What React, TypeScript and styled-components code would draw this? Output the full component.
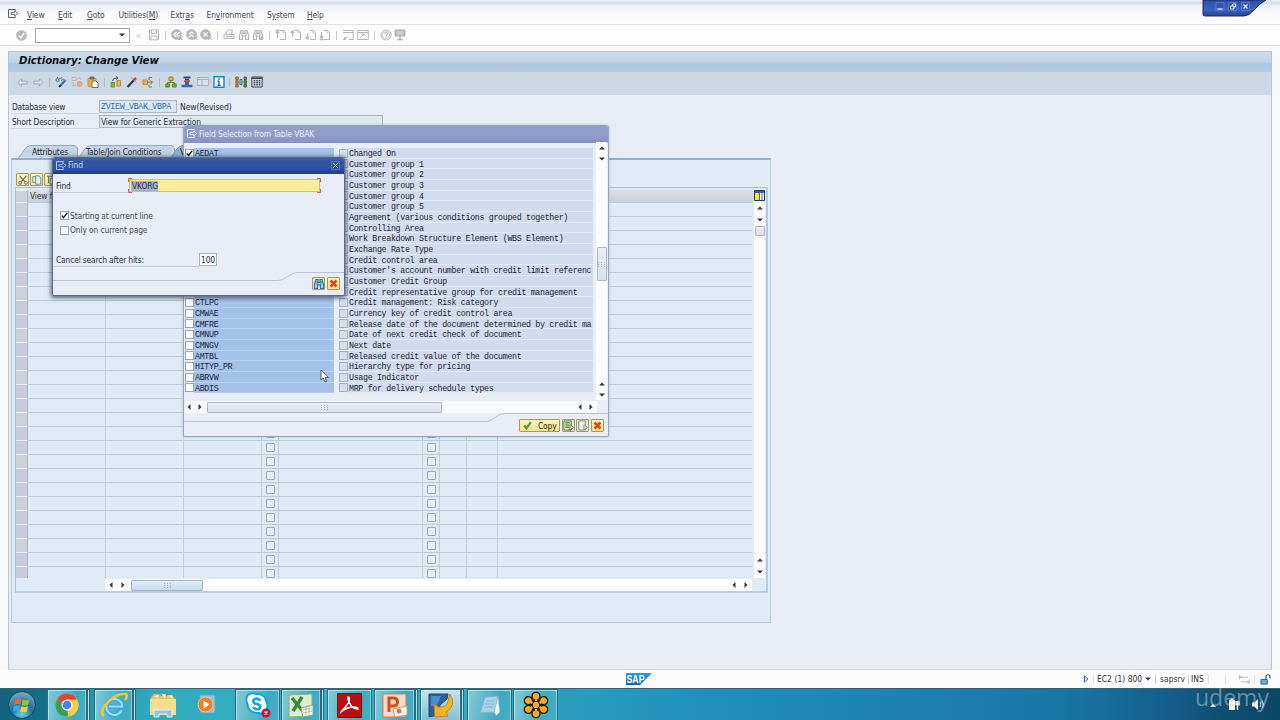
import React from "react";
import styled, { createGlobalStyle, css } from "styled-components";

const Global = createGlobalStyle`
  * { box-sizing: border-box; }
  body { margin: 0; overflow: hidden; font-family: "DejaVu Sans Condensed", "DejaVu Sans", sans-serif; font-stretch: condensed; font-size: 8.4px; letter-spacing: -0.12px; color: #2a2e38; }
  svg { display: block; flex: none; }
`;

const Screen = styled.div`
  position: relative;
  width: 1280px;
  height: 720px;
  overflow: hidden;
  display: flex;
  flex-direction: column;
  background: #f8f9fb;
`;

/* ---------- top bars ---------- */
const MenuBar = styled.nav`
  height: 25px;
  flex: none;
  display: flex;
  align-items: center;
  padding: 5px 0 0 8px;
  border-top: 1px solid #e9edf5;
  border-bottom: 1px solid #dfe1e4;
  background: linear-gradient(#e8ecf4 0, #d2d8e6 2px, #eff0f6 4px, #fbfbfd 14px, #fdfdfe);
`;
const MenuIcon = styled.span`
  width: 19px;
  margin-top: -4px;
`;
const MenuItem = styled.span<{ $w: number }>`
  width: ${(p) => p.$w}px;
  white-space: nowrap;
  color: #45455c;
  letter-spacing: -0.1px;
  u { text-underline-offset: 1px; }
`;
const CommandBar = styled.div`
  height: 21px;
  flex: none;
  display: flex;
  align-items: center;
  padding-left: 14px;
  background: #fdfdfd;
  border-bottom: 1px solid #dcdee2;
`;
const Slot = styled.span<{ $w: number }>`
  width: ${(p) => p.$w}px;
  flex: none;
  display: flex;
  justify-content: center;
  align-items: center;
`;
const Sep = styled.span<{ $w: number; $c?: string }>`
  width: ${(p) => p.$w}px;
  height: 9px;
  flex: none;
  display: flex;
  justify-content: center;
  &::before { content: ""; width: 1px; background: ${(p) => p.$c || "#c9c9cd"}; }
`;
const Combo = styled.span`
  width: 95px;
  height: 15px;
  margin-left: 7px;
  display: flex;
  align-items: center;
  justify-content: flex-end;
  padding-right: 4px;
  background: #fff;
  border: 1px solid #a3a6ab;
`;
const Chevrons = styled.span`
  width: 17px;
  text-align: center;
  color: #c6c6ca;
  font-size: 10px;
`;

/* ---------- work area ---------- */
const Work = styled.main`
  margin: 5px 8px 0;
  height: 619px;
  flex: none;
  border: 1px solid #b9c3cf;
  border-bottom-color: #d4d9e1;
  background: #e8ecf4;
`;
const Title = styled.h1`
  margin: 0;
  height: 20px;
  padding-left: 10px;
  font-size: 11.3px;
  line-height: 18px;
  letter-spacing: -0.03px;
  font-weight: bold;
  font-style: italic;
  color: #0b0d12;
  background: linear-gradient(#cddbea 0, #c3d3e6 50%, #afc6de 60%, #b1c9e1);
`;
const AppBar = styled.div`
  height: 23px;
  display: flex;
  align-items: center;
  padding: 0 0 3px 5px;
  background: #ccd9e4;
`;
const Form = styled.div`
  padding: 4px 0 0 2px;
`;
const FormRow = styled.div`
  height: 15px;
  display: flex;
  align-items: center;
  white-space: nowrap;
`;
const FormLabel = styled.span`
  width: 88px;
  height: 15px;
  line-height: 16px;
  padding-left: 1px;
  border-bottom: 1px solid #d2d6dd;
  letter-spacing: -0.18px;
`;
const ReadField = styled.span<{ $w: number; $mono?: boolean }>`
  width: ${(p) => p.$w}px;
  height: 13px;
  line-height: 12px;
  padding-left: 1px;
  border: 1px solid #a9b4c1;
  background: ${(p) => (p.$mono ? "#dbe7f2" : "#e0e7f1")};
  ${(p) => p.$mono && css`font-family: "Liberation Mono", monospace; font-size: 8.3px; letter-spacing: -0.31px; color: #2b74a8;`}
`;
const FieldNote = styled.span`
  padding-left: 3px;
  font-size: 8.6px;
  letter-spacing: -0.12px;
`;

const Tabs = styled.div`
  height: 12px;
  margin-top: 17px;
  padding-left: 9px;
  display: flex;
  align-items: flex-end;
`;
const Tab = styled.span<{ $w: number; $pad: number }>`
  position: relative;
  width: ${(p) => p.$w}px;
  height: 13px;
  line-height: 15px;
  padding-left: ${(p) => p.$pad}px;
  color: #20242c;
  white-space: nowrap;
  svg { position: absolute; left: 0; top: 0; }
  b { position: relative; font-weight: normal; }
`;
const TabPanel = styled.section`
  width: 760px;
  height: 465px;
  margin-left: 2px;
  border: 1px solid #b3c9dd;
  border-top: 2px solid #8eacd6;
  border-bottom: 1px solid #b4c6d8;
  background: #dfeaf4;
  padding: 13px 2px 0 3px;
`;
const MiniButtons = styled.div`
  display: flex;
  gap: 1px;
  height: 14px;
  padding-left: 1px;
`;
const YellowButton = styled.span<{ $w?: number; $pale?: boolean }>`
  width: ${(p) => p.$w || 13}px;
  height: 13px;
  flex: none;
  display: flex;
  align-items: center;
  justify-content: center;
  gap: 6px;
  border: 1px solid #a49a67;
  border-radius: 1px;
  background: ${(p) => (p.$pale ? "#e3e6cf" : "linear-gradient(#fbf3b8, #f2e48f)")};
  color: #26260f;
`;
const GridFrame = styled.div`
  height: 406px;
  border: 1px solid #a9c2d9;
  border-right: 2px solid #b6cadd;
  border-bottom: 2px solid #bccede;
  display: flex;
`;
const GridMain = styled.div`
  width: 737px;
  padding-top: 2px;
`;
const GridHead = styled.div`
  height: 12px;
  display: flex;
  background: linear-gradient(#dadde1, #cdd1d7);
  line-height: 13px;
`;
const HeadLabel = styled.span`
  flex: 1;
  padding-left: 2px;
`;
const GridBody = styled.div`
  height: 376px;
  overflow: hidden;
`;
const GridRow = styled.div`
  height: 14px;
  display: flex;
`;
const RowHandle = styled.span<{ $violet?: boolean }>`
  width: 12px;
  flex: none;
  background: ${(p) => (p.$violet ? "#c9cbdc" : "#ccd1d7")};
  border-right: 1px solid #a9b3c2;
  border-top: 1px solid #edf1f5;
`;
const Cell = styled.span<{ $w: number; $line?: boolean }>`
  width: ${(p) => p.$w}px;
  flex: none;
  display: flex;
  align-items: center;
  justify-content: center;
  border-top: 1px solid #bccbd9;
  ${(p) => p.$line && css`border-right: 1px solid #becddb;`}
`;
const GhostCheck = styled.i`
  width: 9px;
  height: 9px;
  border: 1px solid #9aa9b9;
  border-radius: 1px;
  background: #e5edf5;
`;
const GridVScroll = styled.div`
  width: 13px;
  display: flex;
  flex-direction: column;
  align-items: center;
  padding-top: 2px;
`;
const VTrack = styled.div`
  width: 11px;
  height: 376px;
  display: flex;
  flex-direction: column;
  align-items: center;
  background: #fbfcfd;
`;
const ArrowBox = styled.span<{ $w?: number; $h?: number }>`
  width: ${(p) => p.$w || 11}px;
  height: ${(p) => p.$h || 12}px;
  flex: none;
  display: flex;
  align-items: center;
  justify-content: center;
`;
const Thumb = styled.span<{ $w: number; $h: number; $blue?: boolean }>`
  width: ${(p) => p.$w}px;
  height: ${(p) => p.$h}px;
  flex: none;
  display: flex;
  align-items: center;
  justify-content: center;
  border: 1px solid ${(p) => (p.$blue ? "#9fb3cb" : "#b1b7c4")};
  border-radius: 1px;
  background: ${(p) => (p.$blue ? "linear-gradient(#e1ebf6, #c8d9eb)" : "linear-gradient(#e9edf4, #dce2ec)")};
`;
const Spacer = styled.span`
  flex: 1;
`;
const GridHScroll = styled.div`
  width: 647px;
  height: 12px;
  margin: 1px 0 0 89px;
  display: flex;
  align-items: center;
  background: #fbfcfd;
`;

/* ---------- status bar and taskbar ---------- */
const StatusBar = styled.footer`
  height: 18px;
  flex: none;
  display: flex;
  align-items: center;
  background: #fcfcfd;
  color: #2c2f36;
  white-space: nowrap;
`;
const StatusGroup = styled.div`
  margin-left: 430px;
  display: flex;
  align-items: center;
  height: 18px;
`;
const StatusText = styled.span<{ $w: number }>`
  width: ${(p) => p.$w}px;
  letter-spacing: 0.05px;
`;
const Taskbar = styled.div`
  position: relative;
  height: 32px;
  flex: none;
  display: flex;
  align-items: stretch;
  border-top: 1px solid #35606f;
  background: linear-gradient(90deg, #12647f 0, #14708a 45px, #2493a9 90px, #2fa9bc 150px, #35b1c3 330px, #33a9c0 480px, #2a9cc0 580px, #2190bf 700px, #1c82b3 900px, #1976a7 1060px, #14618e 1160px, #0e4c6e 1230px, #0c4768);
`;
const TaskButton = styled.span<{ $w: number; $ml?: number; $frame?: boolean; $on?: boolean }>`
  width: ${(p) => p.$w}px;
  margin-left: ${(p) => p.$ml || 0}px;
  flex: none;
  display: flex;
  align-items: center;
  justify-content: center;
  ${(p) =>
    p.$frame &&
    css`
      border: 1px solid #2b6b80;
      border-bottom: 0;
      box-shadow: inset 1px 1px 0 rgba(220, 245, 250, 0.55), inset -1px 0 0 rgba(220, 245, 250, 0.45);
      background: ${p.$on ? "linear-gradient(#c3e3ec, #7fc3d6)" : "linear-gradient(100deg, #83c9d6 0, #5bb8ca 40%, #3fa9bf 70%, #45b0c5)"};
    `}
`;
const Tray = styled.div`
  margin-left: auto;
  padding-right: 15px;
  display: flex;
  align-items: center;
  gap: 10px;
`;
const Watermark = styled.span`
  position: absolute;
  left: 1195px;
  top: -7px;
  font-family: "Open Sans", "Noto Sans", sans-serif;
  font-stretch: normal;
  font-size: 23px;
  line-height: 30px;
  letter-spacing: 0;
  color: rgba(190, 210, 222, 0.5);
`;

/* ---------- windows ---------- */
const WindowControls = styled.div`
  position: absolute;
  left: 1202px;
  top: 0;
`;
const Window = styled.section<{ $x: number; $y: number; $w: number; $h: number; $front?: boolean }>`
  position: absolute;
  left: ${(p) => p.$x}px;
  top: ${(p) => p.$y}px;
  width: ${(p) => p.$w}px;
  height: ${(p) => p.$h}px;
  border: 1px solid ${(p) => (p.$front ? "#5a6a88" : "#97a5bd")};
  border-radius: 3px 3px 2px 2px;
  overflow: hidden;
  display: flex;
  flex-direction: column;
  background: #e9edf5;
  box-shadow: ${(p) => (p.$front ? "0 1px 4px 1px rgba(40,52,80,.75)" : "0 0 2px rgba(90,110,140,.5)")};
`;
const WindowTitle = styled.header<{ $front?: boolean }>`
  height: ${(p) => (p.$front ? 16 : 17)}px;
  flex: none;
  display: flex;
  align-items: center;
  gap: 1px;
  padding: 0 4px 2px 3px;
  color: ${(p) => (p.$front ? "#c9d6f2" : "#e9edf9")};
  background: ${(p) => (p.$front ? "linear-gradient(#3f5da6 0, #34539f 30%, #2f53a6 60%, #1f3d86)" : "linear-gradient(#8f9dcb, #919fce 50%, #8491c2)")};
  span { flex: 1; }
`;
const Close = styled.i`
  width: 9px;
  height: 9px;
  border: 1px solid #4f76c8;
  display: flex;
  align-items: center;
  justify-content: center;
`;
const ListArea = styled.div`
  height: 253px;
  padding: 5px 1px 0 1px;
  display: flex;
`;
const List = styled.div`
  width: 408px;
  flex: none;
`;
const ListRow = styled.div`
  height: 10.68px;
  display: flex;
  font-family: "Liberation Mono", monospace;
  font-size: 8.3px;
  line-height: 11px;
  letter-spacing: -0.32px;
  color: #1d2434;
  white-space: pre;
`;
const Check = styled.i<{ $ghost?: boolean }>`
  width: 9px;
  height: 9px;
  margin-top: 0.5px;
  flex: none;
  border: 1px solid ${(p) => (p.$ghost ? "#a5afc4" : "#98a3b8")};
  background: ${(p) => (p.$ghost ? "#d5ddea" : "#fdfdfe")};
`;
const KeyCell = styled.span`
  width: 140px;
  margin-right: 5px;
  padding-left: 1px;
  overflow: hidden;
  background: #a3c1e9;
  box-shadow: inset 0 -1px 0 #b9d1f0;
`;
const TextCell = styled.span`
  width: 245px;
  padding-left: 1px;
  overflow: hidden;
  background: #d2dbed;
  box-shadow: inset 0 -1px 0 #e3e8f4;
`;
const ListVScroll = styled.div`
  width: 11px;
  margin: -6px 0 -5px auto;
  display: flex;
  flex-direction: column;
  align-items: center;
  background: #fbfcfe;
`;
const ListHScroll = styled.div`
  height: 12px;
  margin: 6px 11px 0 1px;
  display: flex;
  align-items: center;
  background: #f8fafd;
`;
const DialogFoot = styled.div<{ $pad: number }>`
  position: relative;
  margin-top: auto;
  height: 23px;
  padding: ${(p) => p.$pad}px 4px 0 0;
  display: flex;
  justify-content: flex-end;
  gap: 1.6px;
  > svg { position: absolute; left: 0; top: 0; }
  > span { position: relative; }
`;
const FindBody = styled.div`
  padding-left: 1px;
  white-space: nowrap;
`;
const FindRow = styled.div<{ $top: number }>`
  margin-top: ${(p) => p.$top}px;
  height: 15px;
  display: flex;
  align-items: center;
`;
const FindLabel = styled.span<{ $w: number }>`
  width: ${(p) => p.$w}px;
  height: 15px;
  line-height: 16px;
  padding-left: 2px;
  border-bottom: 1px solid #c3cad6;
  letter-spacing: -0.16px;
`;
const FindInput = styled.span`
  position: relative;
  width: 191px;
  height: 13px;
  display: flex;
  align-items: center;
  padding-left: 1px;
  border: 1px solid #c8bf8c;
  background: #fbec98;
  svg { position: absolute; left: -2px; top: -2px; }
`;
const Selected = styled.span`
  height: 10px;
  line-height: 10px;
  padding: 0 0 0 1px;
  background: #a3b4cb;
  color: #26304a;
`;
const HitsInput = styled.span`
  width: 18px;
  height: 13px;
  line-height: 12px;
  text-align: center;
  background: #fbfcfd;
  border: 1px solid #a9b1bd;
`;
const OptionCheck = styled.i`
  width: 9px;
  height: 9px;
  margin: 0 1px 0 6px;
  border: 1px solid #98a3b8;
  background: #fdfdfe;
`;
const OptionText = styled.span`
  letter-spacing: -0.12px;
  color: #444b58;
`;
const Pointer = styled.div`
  position: absolute;
  left: 320px;
  top: 369px;
`;

/* ---------- icons ---------- */
type IcoProps = { s?: number; c?: string; children: React.ReactNode; f?: string };
const Ico = ({ s = 12, c = "#b5b5ba", f = "none", children }: IcoProps) => (
  <svg width={s} height={s} viewBox="0 0 12 12" fill={f} stroke={c} strokeWidth="1">{children}</svg>
);
const Tri = ({ d }: { d: "u" | "d" | "l" | "r" }) => {
  const pts = { u: "0,4.5 6,4.5 3,1.5", d: "0,1.5 6,1.5 3,4.5", l: "4.5,0 4.5,6 1.5,3", r: "1.5,0 1.5,6 4.5,3" }[d];
  return <svg width="6" height="6"><polygon points={pts} fill="#33363f" /></svg>;
};
const Exit = ({ c }: { c: string }) => (
  <svg width="11" height="9" viewBox="0 0 11 9" fill="none" stroke={c}>
    <path d="M7.5 1.5V.5h-7v8h7v-1" /><path d="M3 3.5h3.5v-1.6L10 4.4 6.5 7V5.5H3z" strokeWidth=".8" />
  </svg>
);
const Grip = () => (
  <svg width="7" height="5" fill="#a3adbf"><path d="M0 0h1v1H0zM3 0h1v1H3zM6 0h1v1H6zM0 2h1v1H0zM3 2h1v1H3zM6 2h1v1H6zM0 4h1v1H0zM3 4h1v1H3zM6 4h1v1H6z" /></svg>
);
const Binoculars = ({ c, f, plus }: { c: string; f?: string; plus?: boolean }) => (
  <Ico c={c} f={f || "none"} s={12}>
    <path d="M3 1.5h2v3h2v-3h2l1.5 5v4H7.5V7h-3v3.5h-3v-4z" strokeWidth="1.2" /><path d="M4 3v4M8 3v4" />
    {plus && <path d="M9.5 7v4M7.5 9h4" strokeWidth="1.4" />}
  </Ico>
);
const CheckMark = ({ c = "#1c2230", s = 8, w = 1.6 }: { c?: string; s?: number; w?: number }) => (
  <svg width={s} height={s} viewBox="0 0 8 8" fill="none" stroke={c} strokeWidth={w}><path d="M1 4l2 2.5L7 1" /></svg>
);
const RedCross = () => (
  <svg width="9" height="9" viewBox="0 0 9 9"><path d="M1.5 1.5l6 6m0-6l-6 6" stroke="#d14a1c" strokeWidth="2.6" /></svg>
);
const Disc = ({ children }: { children: React.ReactNode }) => (
  <Ico><circle cx="5.5" cy="5.5" r="5" fill="#b4b4b8" stroke="#c6c6ca" /><g stroke="#fff" strokeWidth="1.2">{children}</g><path d="M8 7.5l3.5 3.5M11.5 7.5L8 11" stroke="#aaa" /></Ico>
);
const Page = ({ a }: { a: string }) => (
  <Ico><path d="M4.5 1.5h4l2 2v7h-5.5" /><path d="M8 1.5v2.5h2.500" strokeWidth=".7" /><path d={a} strokeWidth="1.3" /></Ico>
);

const CommandIcons = () => (
  <>
    <Slot $w={14.7}><Ico><path d="M1.5.8h9v10h-9z" /><path d="M3.5 1v3.5h5V1M3 10.500V7h6v3.500" /></Ico></Slot>
    <Sep $w={8} />
    <Slot $w={14.7}><Disc><path d="M5.500 3L3 5.500 5.500 8M8.500 3L6 5.500 8.500 8" /></Disc></Slot>
    <Slot $w={14.7}><Disc><path d="M3 5l2.500-2L8 5M3 8l2.500-2L8 8" /></Disc></Slot>
    <Slot $w={14.7}><Disc><path d="M3.500 3.500l4 4m0-4l-4 4" /></Disc></Slot>
    <Sep $w={8} />
    <Slot $w={14.7}><Ico><path d="M1 5.500h10v4H1zM3 5L4.500 1h5L8.500 5M2.500 7.500h7" /></Ico></Slot>
    <Slot $w={14.7}><Binoculars c="#b5b5ba" /></Slot>
    <Slot $w={14.7}><Binoculars c="#b5b5ba" plus /></Slot>
    <Sep $w={8} />
    <Slot $w={14.7}><Page a="M.5 1.500h4M2.500 6V2.500M1 4l1.500-1.500L4 4M2.500 6v3" /></Slot>
    <Slot $w={14.7}><Page a="M2.500 7V2M.8 4l1.700-2 1.700 2" /></Slot>
    <Slot $w={14.7}><Page a="M2.500 5v5M.8 8l1.700 2 1.700-2" /></Slot>
    <Slot $w={14.7}><Page a="M.5 10.500h4M2.500 3v6M1 7l1.500 2L4 7" /></Slot>
    <Sep $w={8.500} />
    <Slot $w={14.7}><Ico><path d="M.8 1.500h10.500v9H7M1 3.500h10M1 10.500h3M4 7.500L2 9l2 2M2 9h4" /></Ico></Slot>
    <Slot $w={14.7}><Ico><path d="M.8 1.500h10.500v9H.8zM1 3.500h10M3 9l4-4M4.500 5H7v2.500" /></Ico></Slot>
    <Sep $w={8} />
    <Slot $w={14.7}><Ico><circle cx="6" cy="6" r="5" /><circle cx="6" cy="6" r="3.600" strokeWidth=".6" /><path d="M4.500 5q0-1.500 1.500-1.500T7.500 5Q7.500 6 6 6.500M6 7.500v1.300" /></Ico></Slot>
    <Slot $w={14.7}><Ico><path d="M1 1h10v6H1z" fill="#b0b0b4" /><path d="M2.500 3h7M2.500 5h7" stroke="#e5e5e8" /><path d="M6 7v3M3 10.500h6" strokeWidth="1.500" /></Ico></Slot>
  </>
);

const AppIcons = () => {
  const sep = "#a9b9c8";
  return (
    <>
      <Slot $w={16}><Ico c="#93a5b8" s={11}><path d="M1 6l4-4v2.500h6v3H5V10z" fill="#dbe5ee" /></Ico></Slot>
      <Slot $w={16}><Ico c="#93a9c0" s={11}><path d="M11 6L7 2v2.500H1v3h6V10z" fill="#cfdfee" /></Ico></Slot>
      <Sep $w={7} $c={sep} />
      <Slot $w={16}><Ico c="#3e6fa5"><path d="M1 4a1.500 1.500 0 113 0 1.500 1.500 0 11-3 0M4 3l3-1.500M2 2l1-1" /><path d="M5.500 9.500L10.500 4" strokeWidth="2.200" /><path d="M4 11l1-2 1 1z" fill="#222" stroke="#222" /><path d="M6.500 5a1.500 1.500 0 012.500-1.500" /></Ico></Slot>
      <Slot $w={16}><Ico c="#c3bcae"><path d="M1 1.500h4v3H1z" fill="#d7dccf" /><path d="M6.500 3.500l2-2 1.500 2" stroke="#d5a58e" /><circle cx="8.500" cy="8" r="2.500" fill="#dfa99b" stroke="#d09a8c" /><path d="M2 6v4l3-1" stroke="#a7bf97" /></Ico></Slot>
      <Slot $w={16}><Ico c="#8e6f35"><path d="M1 2.500h8v8H1z" fill="#eeb03c" stroke="#d0902a" /><path d="M3 1h4v2H3z" fill="#6d7380" stroke="#555" strokeWidth=".6" /><path d="M5 5h4l2 2v4.500H5z" fill="#fdfdfd" stroke="#686c78" /></Ico></Slot>
      <Sep $w={6.500} $c={sep} />
      <Slot $w={16}><Ico c="#5f9a3d"><path d="M1 6.500h3.500V11H1z" fill="#7fb54e" /><path d="M2.500 5Q3 1.500 7 2M6 .5l2 1.500-2 1.500" stroke="#4a5a50" /><path d="M7 4.500h3.500v5.500H7z" fill="#f3b84d" stroke="#bd8430" /></Ico></Slot>
      <Slot $w={16}><Ico c="#2d3340"><path d="M1.500 11L8 4" strokeWidth="2" /><path d="M7.500 4.500L10 2" stroke="#d5472c" strokeWidth="2.500" /><path d="M5 1.500l1.500 1M10.500 6.500L9.500 5.500" stroke="#e3705a" /></Ico></Slot>
      <Slot $w={16}><Ico c="#c2832a"><path d="M1 4h4.500v4.500H1z" fill="#f0b24b" /><path d="M5.500 6.200h4.500M8.500 4.500l2 1.700-2 1.800M7 4V1.500h3M7 8.500V11h3" stroke="#8b6a46" /></Ico></Slot>
      <Sep $w={7} $c={sep} />
      <Slot $w={16}><Ico c="#577a35"><path d="M4 1h4v3.500H4z" fill="#edb248" stroke="#a87a28" /><path d="M6 4.500v2M2.500 8V6.500h7V8" /><path d="M.8 8h3.700v3H.8zM7.500 8h3.700v3H7.500z" fill="#7cae48" /></Ico></Slot>
      <Slot $w={16}><Ico c="#2e4b80"><path d="M2.500 1.500h7" strokeWidth="2" /><path d="M3 5.200h6" stroke="#c8412f" strokeWidth="1.800" /><path d="M4 3.500h4" strokeWidth="1.500" /><path d="M6 6v3" stroke="#3f63a0" strokeWidth="4" /><path d="M.5 10h11" stroke="#3b65a8" strokeWidth="2.500" /></Ico></Slot>
      <Slot $w={16}><Ico c="#a9b3bb"><path d="M.5 1.500h11v8H.5zM.5 3.500h11M5 3.500v6" fill="#dce2e8" /></Ico></Slot>
      <Slot $w={16}><Ico c="#2382b8" s={12}><path d="M1 .8h10v10.500H1z" fill="#f3fafd" strokeWidth="1.400" /><path d="M6 5v4.500M4.500 5.200H6M4.500 9.300h3" stroke="#1b5f95" strokeWidth="1.300" /><path d="M5.300 3h1.400" stroke="#1b5f95" strokeWidth="1.500" /></Ico></Slot>
      <Sep $w={6} $c={sep} />
      <Slot $w={16}><Ico c="#86652a" s={12}><path d="M.8 1h2.400v2.500H.8zM.8 4.700h2.400v2.500H.8zM.8 8.400h2.400V11H.8z" fill="#c99134" /><path d="M5 3.500h2v5H5z" stroke="#3c5d80" /><path d="M9 1h2.400v2.500H9zM9 4.700h2.400v2.500H9zM9 8.400h2.400V11H9z" fill="#5e9b46" stroke="#386433" /></Ico></Slot>
      <Slot $w={16}><Ico c="#3a4252" s={12}><path d="M.8 1h10.400v10H.8z" fill="#d4dbe4" /><path d="M1 2.200h10" strokeWidth="1.500" /><path d="M3.500 4v6M6 4v6M8.500 4v6" strokeWidth="1.500" strokeDasharray="1.500 .5" /></Ico></Slot>
    </>
  );
};

const columns: { w: number; line?: boolean; check?: boolean }[] = [
  { w: 78, line: true },
  { w: 78, line: true },
  { w: 78, line: true },
  { w: 17, line: true, check: true },
  { w: 144, line: true },
  { w: 17, line: true, check: true },
  { w: 27, line: true },
  { w: 31, line: true },
  { w: 254 },
];

const fields: [string, string][] = [
  ["AEDAT", "Changed On"],
  ["", "Customer group 1"],
  ["", "Customer group 2"],
  ["", "Customer group 3"],
  ["", "Customer group 4"],
  ["", "Customer group 5"],
  ["", "Agreement (various conditions grouped together)"],
  ["", "Controlling Area"],
  ["", "Work Breakdown Structure Element (WBS Element)"],
  ["", "Exchange Rate Type"],
  ["", "Credit control area"],
  ["", "Customer's account number with credit limit referenc"],
  ["", "Customer Credit Group"],
  ["", "Credit representative group for credit management"],
  ["CTLPC", "Credit management: Risk category"],
  ["CMWAE", "Currency key of credit control area"],
  ["CMFRE", "Release date of the document determined by credit ma"],
  ["CMNUP", "Date of next credit check of document"],
  ["CMNGV", "Next date"],
  ["AMTBL", "Released credit value of the document"],
  ["HITYP_PR", "Hierarchy type for pricing"],
  ["ABRVW", "Usage Indicator"],
  ["ABDIS", "MRP for delivery schedule types"],
];

const TabShape = ({ w, active }: { w: number; active?: boolean }) => (
  <svg width={w} height="13">
    <path d={`M0 12.500Q3 11 6 5Q9 .5 13 .5H${w - 3}L${w - 0.5} 3V12.500`} fill={active ? "#8fb2dd" : "#c3d4e4"} stroke={active ? "#6d94c6" : "#93abc4"} />
  </svg>
);

const WorkArea = () => (
  <Work>
    <Title>Dictionary: Change View</Title>
    <AppBar><AppIcons /></AppBar>
    <Form>
      <FormRow>
        <FormLabel>Database view</FormLabel>
        <ReadField $w={78} $mono>ZVIEW_VBAK_VBPA</ReadField>
        <FieldNote>New(Revised)</FieldNote>
      </FormRow>
      <FormRow>
        <FormLabel>Short Description</FormLabel>
        <ReadField $w={284}>View for Generic Extraction</ReadField>
      </FormRow>
    </Form>
    <Tabs>
      <Tab $w={60} $pad={14}><TabShape w={60} /><b>Attributes</b></Tab>
      <Tab $w={92} $pad={8}><TabShape w={97} /><b>Table/Join Conditions</b></Tab>
      <Tab $w={78} $pad={10}><TabShape w={78} active /><b>V</b></Tab>
    </Tabs>
    <TabPanel>
      <MiniButtons>
        <YellowButton><Ico s={10} c="#5b6670"><path d="M2 1l6 7M10 1L4 8" strokeWidth="1.300" /><circle cx="2.500" cy="9.500" r="1.700" /><circle cx="9.500" cy="9.500" r="1.700" /></Ico></YellowButton>
        <YellowButton><Ico s={10} c="#4a82a8"><path d="M1 2h4v7H1z" /><path d="M4.500 1h4l2 2.500V11h-6z" fill="#e6f2f8" /></Ico></YellowButton>
        <YellowButton><Ico s={10} c="#55606b"><path d="M1 1.500h9M3 2v8" /><path d="M5 4h5v7H5z" fill="#fff" /></Ico></YellowButton>
      </MiniButtons>
      <GridFrame>
        <GridMain>
          <GridHead>
            <RowHandle />
            <HeadLabel>View field</HeadLabel>
          </GridHead>
          <GridBody>
            {Array.from({ length: 27 }, (_, r) => (
              <GridRow key={r}>
                <RowHandle $violet={r % 3 !== 0} />
                {columns.map((c, i) => (
                  <Cell key={i} $w={c.w} $line={c.line}>{c.check && <GhostCheck />}</Cell>
                ))}
              </GridRow>
            ))}
          </GridBody>
          <GridHScroll>
            <ArrowBox $w={12}><Tri d="l" /></ArrowBox>
            <ArrowBox $w={12}><Tri d="r" /></ArrowBox>
            <ArrowBox $w={2} />
            <Thumb $w={72} $h={11} $blue><Grip /></Thumb>
            <Spacer />
            <ArrowBox $w={12}><Tri d="l" /></ArrowBox>
            <ArrowBox $w={12}><Tri d="r" /></ArrowBox>
          </GridHScroll>
        </GridMain>
        <GridVScroll>
          <svg width="11" height="11"><path d="M.5.5h10v10H.5z" fill="#fff" stroke="#23304e" /><path d="M1 1h9v2H1z" fill="#3d5f93" /><path d="M1 3h4v7H1z" fill="#f0e72e" /><path d="M5.500 3v7.500M8 3v7.500" stroke="#50617c" /></svg>
          <ArrowBox $h={1} />
          <VTrack>
            <ArrowBox><Tri d="u" /></ArrowBox>
            <ArrowBox><Tri d="d" /></ArrowBox>
            <Thumb $w={10} $h={10} />
            <Spacer />
            <ArrowBox><Tri d="u" /></ArrowBox>
            <ArrowBox><Tri d="d" /></ArrowBox>
          </VTrack>
        </GridVScroll>
      </GridFrame>
    </TabPanel>
  </Work>
);

const FieldSelection = () => (
  <Window $x={183} $y={125} $w={426} $h={312}>
    <WindowTitle><Exit c="#e9edf9" /><span>Field Selection from Table VBAK</span></WindowTitle>
    <ListArea>
      <List>
        {fields.map(([key, text], i) => (
          <ListRow key={i}>
            <Check>{i === 0 && <CheckMark s={7} />}</Check>
            <KeyCell>{key}</KeyCell>
            <Check $ghost />
            <TextCell>{text}</TextCell>
          </ListRow>
        ))}
      </List>
      <ListVScroll>
        <ArrowBox $h={11}><Tri d="u" /></ArrowBox>
        <ArrowBox $h={11}><Tri d="d" /></ArrowBox>
        <ArrowBox $h={83} />
        <Thumb $w={10} $h={34}><Grip /></Thumb>
        <Spacer />
        <ArrowBox $h={11}><Tri d="u" /></ArrowBox>
        <ArrowBox $h={11}><Tri d="d" /></ArrowBox>
      </ListVScroll>
    </ListArea>
    <ListHScroll>
      <ArrowBox $w={8}><Tri d="l" /></ArrowBox>
      <ArrowBox $w={14}><Tri d="r" /></ArrowBox>
      <Thumb $w={235} $h={11}><Grip /></Thumb>
      <Spacer />
      <ArrowBox $w={11}><Tri d="l" /></ArrowBox>
      <ArrowBox $w={12}><Tri d="r" /></ArrowBox>
    </ListHScroll>
    <DialogFoot $pad={6}>
      <svg width="424" height="12" fill="none" stroke="#b9c3d1"><path d="M0 8.500H302Q305 8.500 308 6.500L316 1.500Q318 .5 321 .5H424" /></svg>
      <YellowButton $w={41}><CheckMark c="#5d9a2f" s={9} w={2} />Copy</YellowButton>
      <YellowButton $pale><Ico s={11} c="#55713d"><path d="M1 1h8v10H1z" fill="#e9efdc" /><path d="M2.500 3h5M2.500 5.500h4M2.500 8h4" stroke="#53a331" strokeWidth="1.600" /><path d="M7.500 5l4 3-4 3z" fill="#f7f7f0" /></Ico></YellowButton>
      <YellowButton $pale><Ico s={11} c="#7d8578"><path d="M2 1h7v10H2z" fill="#eef0ea" /><path d="M7.500 5l4 3-4 3z" fill="#f7f7f0" /></Ico></YellowButton>
      <YellowButton><RedCross /></YellowButton>
    </DialogFoot>
  </Window>
);

const FindDialog = () => (
  <Window $x={52} $y={157} $w={293} $h={139} $front>
    <WindowTitle $front><Exit c="#b9c9ee" /><span>Find</span><Close><svg width="5" height="5"><path d="M0 0l5 5M5 0L0 5" stroke="#dfe8fb" /></svg></Close></WindowTitle>
    <FindBody>
      <FindRow $top={4}>
        <FindLabel $w={75}>Find</FindLabel>
        <FindInput>
          <Selected>VKORG</Selected>
          <svg width="193" height="15" fill="none" stroke="#d8555c"><path d="M4 .5H.5V4M.5 11v3.500H4M189 .5h3.500V4M192.500 11v3.500H189" /></svg>
        </FindInput>
      </FindRow>
      <FindRow $top={15}><OptionCheck><CheckMark s={7} /></OptionCheck><OptionText>Starting at current line</OptionText></FindRow>
      <FindRow $top={-0.4}><OptionCheck /><OptionText>Only on current page</OptionText></FindRow>
      <FindRow $top={14.4}><FindLabel $w={145}>Cancel search after hits:</FindLabel><HitsInput>100</HitsInput></FindRow>
    </FindBody>
    <DialogFoot $pad={5}>
      <svg width="291" height="12" fill="none" stroke="#b9c3d1"><path d="M0 8.500H225Q228 8.500 231 6.500L240 1.500Q242 .5 245 .5H291" /></svg>
      <YellowButton $pale><Binoculars c="#2f7299" f="#b9dcea" /></YellowButton>
      <YellowButton><RedCross /></YellowButton>
    </DialogFoot>
  </Window>
);

const TaskIcons = () => (
  <>
    <TaskButton $w={44}>
      <svg width="30" height="30" viewBox="0 0 30 30">
        <defs><radialGradient id="orb" cx=".5" cy=".85" r=".9"><stop offset="0" stopColor="#5fd0f0" /><stop offset=".45" stopColor="#1d6ea0" /><stop offset="1" stopColor="#8fb4c6" /></radialGradient></defs>
        <circle cx="15" cy="15" r="13.500" fill="url(#orb)" stroke="#0e4560" />
        <path d="M8 10q3-2.500 6.500-1l-1 5.500q-3-1.300-6.500.5z" fill="#ee6a2b" /><path d="M15.700 9.500q3 1.500 6.800 0l-1.300 5.500q-3 1.500-6.500 0z" fill="#8cc63e" />
        <path d="M6.800 16.200q3-1.800 6.500-.5l-1.200 5.300q-3-1.300-6.500.5z" fill="#3fa4e4" /><path d="M14.500 16.200q3.300 1.500 6.500 0l-1.300 5.500q-3 1.300-6.500-.3z" fill="#fcc92c" />
      </svg>
    </TaskButton>
    <TaskButton $w={40} $ml={3} $frame>
      <svg width="24" height="24" viewBox="0 0 24 24"><circle cx="12" cy="12" r="11.500" fill="#f7cc3d" /><path d="M12 12L2 6.200A11.500 11.500 0 0122 6.500z" fill="#db4437" /><path d="M2 6.200L12 12l1 11.500A11.500 11.500 0 012 6.200z" fill="#3a9e57" /><path d="M12 6.500H22a11.500 11.500 0 01-9.500 17L17 14z" fill="#f7cc3d" /><circle cx="12" cy="12" r="5.500" fill="#fff" /><circle cx="12" cy="12" r="4.300" fill="#4b82ea" /></svg>
    </TaskButton>
    <TaskButton $w={3} $frame />
    <TaskButton $w={39} $ml={4} $frame>
      <svg width="28" height="28" viewBox="0 0 28 28" fill="none"><path d="M21.500 19.500a8 8 0 11.800-4H9" stroke="#3aa9e4" strokeWidth="4.800" /><path d="M21.500 19.500a8 8 0 11.800-4H9" stroke="#9edefa" strokeWidth="2" /><path d="M4 25Q-1 20 8 11T26 3q2 2-1 6" stroke="#f2c730" strokeWidth="2.500" /></svg>
    </TaskButton>
    <TaskButton $w={3} $frame />
    <TaskButton $w={44} $ml={5}>
      <svg width="28" height="28" viewBox="0 0 28 28"><path d="M2 6l3-3h5l2 2h12l2 3v16H2z" fill="#e6c566" /><path d="M4 5l6-2v4M12 3h5v5M18 4h6v4" fill="#f8f1dc" stroke="#b78f51" strokeWidth=".6" /><path d="M1 8h26v16H1z" fill="#f4dd8d" /><path d="M5 26v-7h18v7h-5v-3h-8v3z" fill="#8cc8ea" stroke="#d6effa" /></svg>
    </TaskButton>
    <TaskButton $w={44}>
      <svg width="20" height="21" viewBox="0 0 20 21"><path d="M3 1h15v18H3z" fill="#8fc7e2" stroke="#5ea8cb" /><circle cx="8.500" cy="10.500" r="7.500" fill="#ef7d22" stroke="#f9c49a" /><path d="M6.500 6.500v8l6-4z" fill="#fff" /></svg>
    </TaskButton>
    <TaskButton $w={45} $ml={6} $frame>
      <svg width="26" height="26" viewBox="0 0 26 26"><path d="M3 3q4-3 8-1q9-1 10.500 8q2 4 0 8q-3 5-8 3Q3 21 2.500 12Q0 7 3 3z" fill="#fff" stroke="#12a3dc" strokeWidth="2" /><path d="M15.500 8.500Q12 5.500 9 7.500q-2 2.500 1 4l3.500 1q3 1.500 1 4-3.500 2-6.500-1.500" fill="none" stroke="#12a3dc" strokeWidth="2.600" /><circle cx="21" cy="21" r="4.500" fill="#c4122f" /><path d="M19.500 19.500l3 3m0-3l-3 3" stroke="#fff" strokeWidth="1.200" /></svg>
    </TaskButton>
    <TaskButton $w={40} $ml={1} $frame>
      <svg width="26" height="25" viewBox="0 0 26 25"><path d="M1 2l23-1v22l-23 1z" fill="#dcedd2" stroke="#86b172" /><path d="M4 5l10 12M14 4L5 18" stroke="#34893a" strokeWidth="3.500" /><path d="M13 15l12-3v10l-10 2z" fill="#fff" stroke="#82a87a" /><path d="M15 17l9-2M15 20l9-2M18 14v9M21 13v9" stroke="#85b576" strokeWidth=".7" /></svg>
    </TaskButton>
    <TaskButton $w={3} $frame />
    <TaskButton $w={45} $ml={3} $frame>
      <svg width="25" height="25" viewBox="0 0 25 25"><path d="M.5.500h24v24H.5z" fill="#b80f14" stroke="#861015" /><path d="M4 19Q8 15 12 9Q13 4 11.500 4T12 9q3 7 9 7 0-2-5-2T5 18q-2 2-1 2" fill="none" stroke="#fff" strokeWidth="1.400" /></svg>
    </TaskButton>
    <TaskButton $w={41} $ml={2} $frame>
      <svg width="26" height="25" viewBox="0 0 26 25"><path d="M1 1h23v23H1z" fill="#f6d9c9" stroke="#cf7d55" /><path d="M7 19V5h4q4.500 0 4.500 4T11 13H7" fill="none" stroke="#cf4f1e" strokeWidth="3" /><path d="M11 16l14-3v9l-12 2z" fill="#fff" stroke="#d58d6c" /><circle cx="17" cy="18" r="2.500" fill="#df7240" /></svg>
    </TaskButton>
    <TaskButton $w={3} $frame />
    <TaskButton $w={41} $ml={2} $frame $on>
      <svg width="28" height="26" viewBox="0 0 28 26"><path d="M2 2h19l-1 5-7 6-2 10-9 2z" fill="#2b5f9f" stroke="#1c447c" /><path d="M4 4h10l-4 10H4z" fill="#4f8cc9" /><path d="M23 2Q30 14 19 20l2 4-13 1-1-13 4 3Q20 16 21 9z" fill="#f8b320" stroke="#ca8410" strokeLinejoin="round" /></svg>
    </TaskButton>
    <TaskButton $w={3} $frame />
    <TaskButton $w={45} $ml={3} $frame>
      <svg width="26" height="25" viewBox="0 0 26 25"><path d="M8 4l13-1-3 16-15 1z" fill="#a6d4e2" stroke="#76b3c6" /><path d="M21 3l2 16-4 4-2-4z" fill="#e8f5fa" stroke="#7dafc0" strokeWidth=".7" /><path d="M9 8h9M8 11h9M7 14h9" stroke="#7ab5ca" strokeWidth=".8" /></svg>
    </TaskButton>
    <TaskButton $w={45} $ml={1} $frame>
      <svg width="28" height="28" viewBox="-14 -14 28 28">
        {[0, 60, 120, 180, 240, 300].map((a) => (
          <g key={a} transform={`rotate(${a})`}><path d="M0 -3V-8" stroke="#231c10" strokeWidth="5" /><circle cy="-8.800" r="4" fill="#f7a72a" stroke="#231c10" strokeWidth="1.400" /><path d="M0 -4V-7" stroke="#f7a72a" strokeWidth="2.500" /></g>
        ))}
        <circle r="3" fill="#f7a72a" />
      </svg>
    </TaskButton>
  </>
);

export default function App() {
  return (
    <Screen>
      <Global />
      <MenuBar>
        <MenuIcon><Exit c="#5a5c70" /></MenuIcon>
        <MenuItem $w={31}><u>V</u>iew</MenuItem>
        <MenuItem $w={29}><u>E</u>dit</MenuItem>
        <MenuItem $w={31.5}><u>G</u>oto</MenuItem>
        <MenuItem $w={52}>Utilities(<u>M</u>)</MenuItem>
        <MenuItem $w={36}>Extr<u>a</u>s</MenuItem>
        <MenuItem $w={60.5}>En<u>v</u>ironment</MenuItem>
        <MenuItem $w={40}>S<u>y</u>stem</MenuItem>
        <MenuItem $w={30}><u>H</u>elp</MenuItem>
      </MenuBar>
      <CommandBar>
        <Slot $w={14}><Ico s={11}><circle cx="6" cy="6" r="5.500" fill="#b7b7bb" stroke="#c4c4c8" /><path d="M3 6l2.300 2.500L9 3.500" stroke="#fff" strokeWidth="1.700" /></Ico></Slot>
        <Combo><Tri d="d" /></Combo>
        <Chevrons>«</Chevrons>
        <CommandIcons />
      </CommandBar>
      <WorkArea />
      <StatusBar>
        <Slot $w={626} />
        <svg width="27" height="14">
          <defs><linearGradient id="sap" x2="0" y2="1"><stop offset="0" stopColor="#23a0dc" /><stop offset="1" stopColor="#1663a8" /></linearGradient></defs>
          <polygon points="0,1 26,1 14,13 0,13" fill="url(#sap)" />
          <text x="0.500" y="11" fontFamily="Liberation Sans, sans-serif" fontWeight="bold" fontSize="10.500" textLength="18" letterSpacing="0" lengthAdjust="spacingAndGlyphs" fill="#fff">SAP</text>
        </svg>
        <StatusGroup>
          <Slot $w={6}><svg width="5" height="8"><path d="M.5.800L4 4 .5 7.200z" fill="#e6eefa" stroke="#4d6da3" /></svg></Slot>
          <Sep $w={8} $c="#dcdfe4" />
          <StatusText $w={48}>EC2 (1) 800</StatusText>
          <Slot $w={6}><Tri d="d" /></Slot>
          <Sep $w={9} $c="#c9ced6" />
          <StatusText $w={26}>sapsrv</StatusText>
          <Sep $w={5} $c="#c9ced6" />
          <StatusText $w={14}>INS</StatusText>
          <Sep $w={7} $c="#dcdfe4" />
          <Sep $w={26} $c="#dcdfe4" />
          <Slot $w={12}><Ico s={11} c="#a6abb3"><path d="M.5 1v5M1 3.500h9M3 2L1.500 3.500 3 5M11 6v5M2 8.500h9M9 7l1.500 1.500L9 10" strokeWidth=".9" /></Ico></Slot>
          <Sep $w={9} $c="#dcdfe4" />
          <Slot $w={12}><Ico s={11} c="#3a4a5e"><path d="M1 6h7v5H1z" fill="#62aede" stroke="#27608e" /><path d="M6.500 6V3a2.200 2.200 0 014.400 0v2" strokeWidth="1.300" /></Ico></Slot>
        </StatusGroup>
      </StatusBar>
      <Taskbar>
        <TaskIcons />
        <Watermark>udemy</Watermark>
        <Tray>
          <svg width="6" height="4"><path d="M0 4l3-3 3 3z" fill="#fff" /></svg>
          <Slot $w={16}><svg width="12" height="13"><path d="M1 2h6v10H1z" fill="#fff" /><path d="M2.500.500h3V2h-3z" fill="#fff" /><path d="M9.500 12V3M8 3v3.500h3V3" stroke="#fff" fill="none" strokeWidth="1.300" /></svg></Slot>
          <svg width="13" height="13" fill="none"><path d="M0 4.500h2.500L6 1v11L2.500 8.500H0z" fill="#fff" /><path d="M8 4q1.500 2.500 0 5M10 2.500q3 4 0 8" stroke="#dcebf3" /></svg>
        </Tray>
      </Taskbar>
      <WindowControls>
        <svg width="66" height="18">
          <defs><linearGradient id="ctl" x2="0" y2="1"><stop offset="0" stopColor="#2c4da6" /><stop offset=".6" stopColor="#3c64c4" /><stop offset="1" stopColor="#24418f" /></linearGradient></defs>
          <path d="M1 0H64Q57 4 52 10T42 16H3Q1 16 1 14z" fill="url(#ctl)" stroke="#1c2b5c" />
          <path d="M14 2.500h8v8h-8zM26.500 2.500h8v8h-8zM39.500 2.500h8v8h-8z" fill="#3156b0" stroke="#5579cd" />
          <path d="M15.500 9h5" stroke="#e4ecff" strokeWidth="1.400" /><path d="M30.500 6V4h3v3h-2M28.500 6h3.500v3h-3.500z" fill="none" stroke="#e4ecff" /><path d="M41.500 4.500l4 4m0-4l-4 4" stroke="#e4ecff" strokeWidth="1.300" />
        </svg>
      </WindowControls>
      <FieldSelection />
      <FindDialog />
      <Pointer>
        <svg width="10" height="14"><path d="M1 1v10l2.300-2 1.700 4 1.700-.8L5 8.500h3.500z" fill="#fff" stroke="#3b4d75" strokeWidth=".9" /></svg>
      </Pointer>
    </Screen>
  );
}
